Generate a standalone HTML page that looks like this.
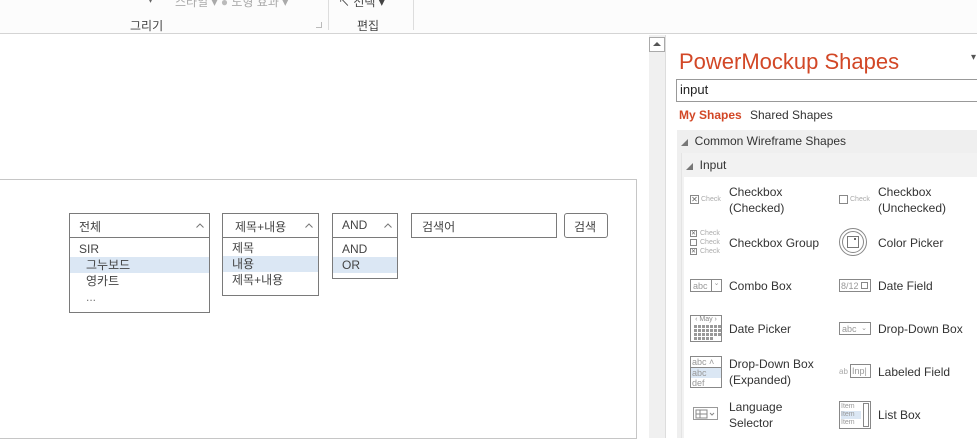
<!DOCTYPE html>
<html><head><meta charset="utf-8"><style>
*{margin:0;padding:0;box-sizing:border-box}
body{width:977px;height:438px;overflow:hidden;background:#fff;font-family:"Liberation Sans","Noto Sans CJK KR",sans-serif;position:relative;color:#333}
.a{position:absolute}
.t{position:absolute;white-space:nowrap}
.lb{position:absolute;border:1px solid #7a7a7a;background:#fff;font-size:12px;color:#444}
.lb .h{height:24px;border-bottom:1px solid #7a7a7a;padding:4px 0 0 9px;position:relative}
.lb .h svg{position:absolute;right:5px;top:9px}
.lb .r{height:16px;line-height:16px;padding-left:9px}
.sel{background:#dbe7f4}
.it{position:absolute;font-size:12px;color:#333;line-height:16px}
.ic{position:absolute;border:1px solid #888;font-size:8px;color:#999;line-height:1;white-space:nowrap;overflow:hidden}
.g{position:absolute;left:3px;top:9px;display:grid;grid-template-columns:repeat(8,3px);gap:1px}
.g i{width:3px;height:3px;background:#999;display:block}
</style></head><body>
<div class="a" style="left:0;top:0;width:977px;height:34px;background:#fcfcfc;border-bottom:1px solid #d4d4d4"></div>
<div class="t" style="left:148px;top:-5px;font-size:10px;color:#666">▾</div>
<div class="t" style="left:175px;top:-7px;font-size:12px;color:#aaa">스타일 ▾ <span style="color:#bbb">●</span> 도형 효과 ▾</div>
<div class="t" style="left:338px;top:-7px;font-size:12px;color:#444">↖ 선택 ▾</div>
<div class="t" style="left:130px;top:17px;font-size:12px;color:#444">그리기</div>
<div class="t" style="left:357px;top:17px;font-size:12px;color:#444">편집</div>
<div class="a" style="left:316px;top:22px;width:6px;height:6px;border-right:1px solid #bbb;border-bottom:1px solid #bbb"></div>
<div class="a" style="left:328px;top:0;width:1px;height:30px;background:#ddd"></div>
<div class="a" style="left:413px;top:0;width:1px;height:30px;background:#ddd"></div>
<div class="a" style="left:0;top:179px;width:637px;height:260px;border:1px solid #c6c6c6;border-left:none;background:#fff"></div>
<div class="a" style="left:649px;top:35px;width:16px;height:403px;background:#f0f0f0"></div>
<div class="a" style="left:649px;top:37px;width:16px;height:15px;border:1px solid #aaa;background:#fff"></div>
<div class="a" style="left:653px;top:42px;width:0;height:0;border-left:4px solid transparent;border-right:4px solid transparent;border-bottom:4px solid #555"></div>
<div class="a" style="left:665px;top:35px;width:1px;height:403px;background:#ddd"></div>
<div class="a" style="left:666px;top:35px;width:311px;height:403px;background:#fff"></div>
<div class="t" style="left:679px;top:49px;font-size:22px;color:#d24726">PowerMockup Shapes</div>
<div class="t" style="left:971px;top:52px;font-size:10px;color:#555">▾</div>
<div class="a" style="left:676px;top:79px;width:310px;height:23px;border:1px solid #999;background:#fff"></div>
<div class="t" style="left:680px;top:82px;font-size:13px;color:#222">input</div>
<div class="t" style="left:679px;top:108px;font-size:12px;font-weight:bold;color:#d24726">My Shapes</div>
<div class="t" style="left:750px;top:108px;font-size:12px;color:#333">Shared Shapes</div>
<div class="a" style="left:677px;top:130px;width:300px;height:308px;background:#efefef"></div>
<div class="t" style="left:681px;top:134px;font-size:12px;color:#333"><span style="font-size:7px;color:#777">◢</span>&nbsp; Common Wireframe Shapes</div>
<div class="a" style="left:681px;top:153px;width:296px;height:285px;background:#f2f2f2;border-left:1px solid #e4e4e4"></div>
<div class="t" style="left:686px;top:158px;font-size:12px;color:#333"><span style="font-size:7px;color:#777">◢</span>&nbsp; Input</div>
<div class="a" style="left:684px;top:177px;width:293px;height:261px;background:#fff"></div>
<!-- items -->
<div class="ic" style="left:690px;top:195px;width:9px;height:9px;font-size:8px;text-align:center;color:#666">✕</div><div class="t" style="left:701px;top:196px;font-size:7px;color:#aaa">Check</div>
<div class="it" style="left:729px;top:184px">Checkbox<br>(Checked)</div>
<div class="ic" style="left:839px;top:195px;width:9px;height:9px"></div><div class="t" style="left:850px;top:196px;font-size:7px;color:#aaa">Check</div>
<div class="it" style="left:878px;top:184px">Checkbox<br>(Unchecked)</div>
<div class="ic" style="left:690px;top:230px;width:7px;height:7px;font-size:6px;text-align:center;color:#666">✕</div>
<div class="ic" style="left:690px;top:239px;width:7px;height:7px"></div>
<div class="ic" style="left:690px;top:248px;width:7px;height:7px;font-size:6px;text-align:center;color:#666">✕</div>
<div class="t" style="left:700px;top:229px;font-size:7px;color:#aaa;line-height:9px">Check<br>Check<br>Check</div>
<div class="it" style="left:729px;top:235px">Checkbox Group</div>
<div class="a" style="left:839px;top:228px;width:28px;height:28px;border:1px solid #888;border-radius:50%"></div>
<div class="a" style="left:842px;top:231px;width:22px;height:22px;border:1px solid #888;border-radius:50%"></div>
<div class="a" style="left:847px;top:236px;width:12px;height:12px;border:1px solid #777"></div>
<div class="a" style="left:854px;top:238px;width:2px;height:2px;background:#666"></div>
<div class="it" style="left:878px;top:235px">Color Picker</div>
<div class="ic" style="left:690px;top:279px;width:32px;height:13px;padding:2px 2px;font-size:9px">abc<span style="position:absolute;right:0;top:0;width:10px;height:11px;border-left:1px solid #888;text-align:center;font-size:7px">⌄</span></div>
<div class="it" style="left:729px;top:278px">Combo Box</div>
<div class="ic" style="left:839px;top:279px;width:32px;height:13px;padding:2px 1px;font-size:9px">8/12 <span style="position:absolute;right:2px;top:2px;width:7px;height:7px;border:1px solid #888"></span></div>
<div class="it" style="left:878px;top:278px">Date Field</div>
<div class="ic" style="left:690px;top:315px;width:32px;height:27px;font-size:7px;text-align:center;line-height:8px;color:#888">‹ May ›<div class="g"><i></i><i></i><i></i><i></i><i></i><i></i><i></i><i></i><i></i><i></i><i></i><i></i><i></i><i></i><i></i><i></i><i></i><i></i><i></i><i></i><i></i><i></i><i></i><i></i><i></i><i></i><i></i><i></i><i></i></div></div>
<div class="it" style="left:729px;top:321px">Date Picker</div>
<div class="ic" style="left:839px;top:322px;width:32px;height:13px;padding:2px 2px;font-size:9px">abc <span style="font-size:7px;position:absolute;right:3px">⌄</span></div>
<div class="it" style="left:878px;top:321px">Drop-Down Box</div>
<div class="ic" style="left:690px;top:356px;width:32px;height:32px;font-size:9px;line-height:10px"><div style="border-bottom:1px solid #888;padding-left:1px">abc ˄</div><div style="background:#dbe7f4;padding-left:1px">abc</div><div style="padding-left:1px">def</div></div>
<div class="it" style="left:729px;top:356px">Drop-Down Box<br>(Expanded)</div>
<div class="t" style="left:839px;top:367px;font-size:8px;color:#aaa">ab</div>
<div class="ic" style="left:850px;top:364px;width:21px;height:14px;font-size:9px;padding:2px 1px">Inp|</div>
<div class="it" style="left:878px;top:364px">Labeled Field</div>
<div class="ic" style="left:693px;top:407px;width:25px;height:13px;font-size:8px;border-color:#999"><svg width="25" height="13" style="position:absolute;left:0;top:0"><rect x="2" y="2" width="11" height="8" fill="none" stroke="#888"/><line x1="6" y1="2" x2="6" y2="10" stroke="#888"/><line x1="2" y1="6" x2="13" y2="6" stroke="#888"/><path d="M16 5l2 2 2-2" fill="none" stroke="#888"/></svg></div>
<div class="it" style="left:729px;top:399px">Language<br>Selector</div>
<div class="ic" style="left:839px;top:401px;width:32px;height:28px;font-size:7px;line-height:8px;padding:1px"><div>Item</div><div style="background:#dbe7f4;width:20px">Item</div><div>Item</div><span style="position:absolute;right:1px;top:1px;width:6px;height:24px;border:1px solid #888"></span></div>
<div class="it" style="left:878px;top:407px">List Box</div>
<!-- canvas widgets -->
<div class="lb" style="left:69px;top:213px;width:141px;height:100px"><div class="h">전체<svg width="8" height="5"><path d="M0.5 4.5L4 1l3.5 3.5" fill="none" stroke="#777"/></svg></div><div class="r" style="margin-top:3px">SIR</div><div class="r sel" style="padding-left:16px">그누보드</div><div class="r" style="padding-left:16px">영카트</div><div class="r" style="padding-left:16px;color:#777">...</div></div>
<div class="lb" style="left:222px;top:213px;width:97px;height:83px"><div class="h" style="padding-left:12px">제목+내용<svg width="8" height="5"><path d="M0.5 4.5L4 1l3.5 3.5" fill="none" stroke="#777"/></svg></div><div class="r" style="margin-top:2px">제목</div><div class="r sel">내용</div><div class="r">제목+내용</div></div>
<div class="lb" style="left:332px;top:213px;width:66px;height:66px"><div class="h">AND<svg width="8" height="5"><path d="M0.5 4.5L4 1l3.5 3.5" fill="none" stroke="#777"/></svg></div><div class="r" style="margin-top:3px">AND</div><div class="r sel">OR</div></div>
<div class="lb" style="left:411px;top:213px;width:146px;height:25px;padding:4px 0 0 10px">검색어</div>
<div class="lb" style="left:564px;top:213px;width:44px;height:25px;border-radius:3px;padding:4px 0 0 9px">검색</div>
</body></html>
